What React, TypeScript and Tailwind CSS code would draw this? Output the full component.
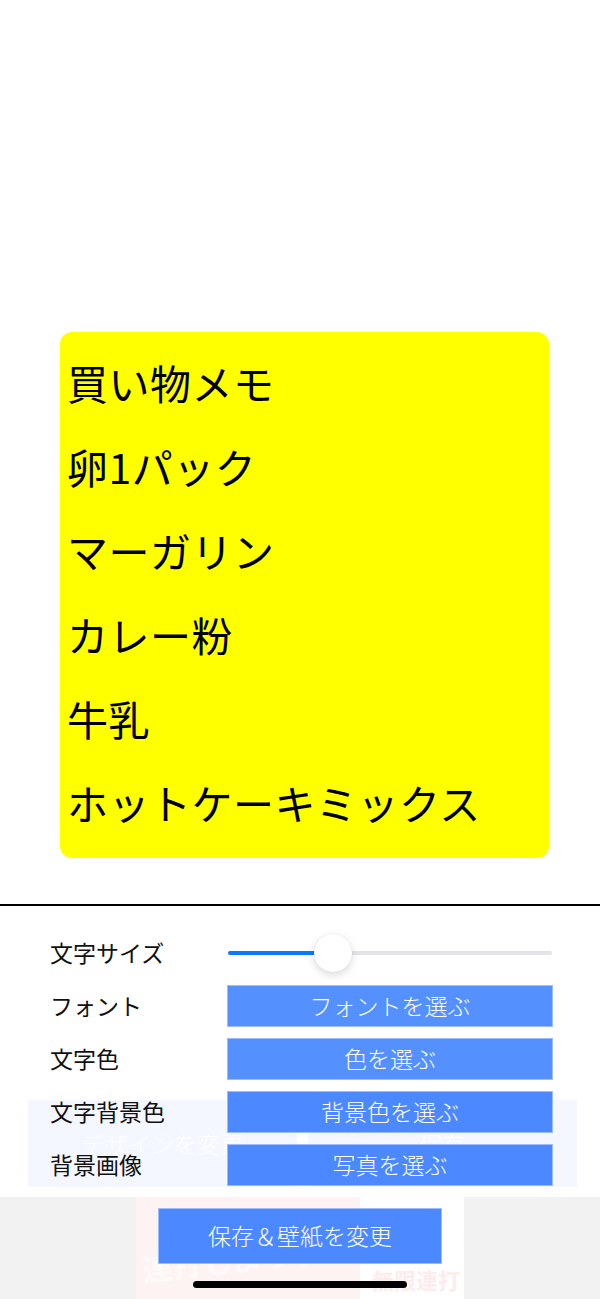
import React from "react";

const items = ["買い物メモ", "卵1パック", "マーガリン", "カレー粉", "牛乳", "ホットケーキミックス"];

function Slider() {
  return (
    <div className="relative h-[42px] flex items-center">
      <div className="relative w-full h-[4px] rounded-full bg-[#e3e3e8] ml-[1px] mr-[1px]">
        <div className="absolute left-0 top-0 h-[4px] w-[105px] rounded-full bg-[#0a7aff]" />
        <div className="absolute left-[86px] top-[-17px] w-[38px] h-[38px] rounded-full bg-white shadow-[0_3px_8px_rgba(0,0,0,0.15),0_0_1px_rgba(0,0,0,0.12)]" />
      </div>
    </div>
  );
}

function Btn({ label, dark }: { label: string; dark?: boolean }) {
  return (
    <div
      className={
        "h-[42px] flex items-center justify-center text-white text-[23px] font-light border border-[#9dbcff] " +
        (dark ? "bg-[#4c88ff]" : "bg-[#5590ff]")
      }
    >
      {label}
    </div>
  );
}

function Label({ text }: { text: string }) {
  return <div className="h-[42px] flex items-center text-[23px] text-[#111]">{text}</div>;
}

export default function App() {
  return (
    <div className="w-[600px] h-[1299px] bg-white relative overflow-hidden font-['Noto_Sans_CJK_JP',sans-serif]">
      <div className="h-[332px]" />
      <div className="ml-[60px] w-[489px] h-[526px] bg-[#ffff00] rounded-[12px] pt-[8px] pb-[14px] pl-[7px]">
        {items.map((t) => (
          <div key={t} className="h-[84px] leading-[84px] text-[41px] tracking-[0.5px] text-black whitespace-nowrap">
            {t}
          </div>
        ))}
      </div>
      <div className="mt-[46px] h-[1.5px] bg-black" />
      <div className="relative mt-[26px]">
        <div className="absolute left-[28px] top-[168px] w-[549px] h-[87px] flex gap-[11px] z-0">
          <div className="w-[269px] h-full bg-[#f4f7ff] flex items-center justify-center text-white text-[23px] font-light">
            デザインを変更
          </div>
          <div className="flex-1 h-full bg-[#f4f7ff] flex items-center justify-center text-white text-[23px] font-light">
            保存
          </div>
        </div>
        <div className="relative z-10 pl-[50px] pr-[47px] grid grid-cols-[177px_1fr] gap-y-[11px]">
          <Label text="文字サイズ" />
          <Slider />
          <Label text="フォント" />
          <Btn label="フォントを選ぶ" />
          <Label text="文字色" />
          <Btn label="色を選ぶ" />
          <Label text="文字背景色" />
          <Btn label="背景色を選ぶ" dark />
          <Label text="背景画像" />
          <Btn label="写真を選ぶ" dark />
        </div>
      </div>
      <div className="mt-[11px] h-[102px] bg-[#f2f2f2] relative">
        <div className="ml-[136px] w-[328px] h-full flex">
          <div className="w-[224px] h-full bg-[#fdf3f2] relative overflow-hidden">
            <div className="absolute left-[6px] top-[40px] text-[#fffafa] text-[30px] font-bold -rotate-6 whitespace-nowrap">
              連打しよう♪
            </div>
          </div>
          <div className="flex-1 h-full bg-white relative">
            <div className="absolute left-[26px] top-[11px] w-[52px] h-[52px] rounded-[12px] bg-[#f7e3e3]" />
            <div className="absolute left-[12px] top-[66px] text-[22px] font-bold text-[#fdeceb] whitespace-nowrap">
              無限連打
            </div>
          </div>
        </div>
        <div className="absolute left-[158px] top-[11px] w-[284px] h-[56px] bg-[#4c88ff] border border-[#9dbcff] flex items-center justify-center text-white text-[23px] font-light">
          保存＆壁紙を変更
        </div>
        <div className="absolute left-[193px] top-[84px] w-[214px] h-[7px] rounded-full bg-black" />
      </div>
    </div>
  );
}
